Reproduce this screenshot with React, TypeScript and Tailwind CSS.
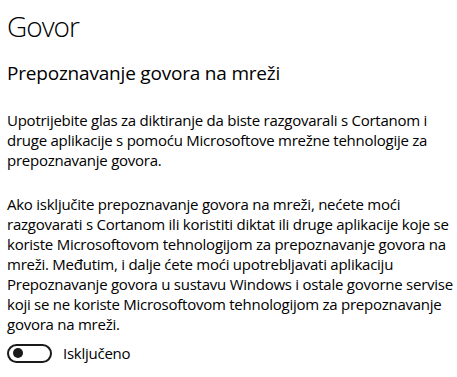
export default function App() {
  const font = { fontFamily: '"Open Sans", "Noto Sans", sans-serif' }
  return (
    <div className="h-[377px] w-[457px] overflow-hidden bg-white px-[7px] text-black" style={font}>
      <h1 className="mt-[8px] text-[28px] font-light leading-[36px] tracking-[-1px]">Govor</h1>
      <h2 className="mt-[15px] text-[19px] font-normal leading-[28px] tracking-[-0.2px]">Prepoznavanje govora na mreži</h2>
      <p className="mt-[23px] text-[15px] leading-[20px] tracking-[-0.25px] whitespace-nowrap">
        <span className="block">Upotrijebite glas za diktiranje da biste razgovarali s Cortanom i</span>
        <span className="block">druge aplikacije s pomoću Microsoftove mrežne tehnologije za</span>
        <span className="block">prepoznavanje govora.</span>
      </p>
      <p className="mt-[24px] text-[15px] leading-[20px] tracking-[-0.25px] whitespace-nowrap">
        <span className="block">Ako isključite prepoznavanje govora na mreži, nećete moći</span>
        <span className="block">razgovarati s Cortanom ili koristiti diktat ili druge aplikacije koje se</span>
        <span className="block">koriste Microsoftovom tehnologijom za prepoznavanje govora na</span>
        <span className="block">mreži. Međutim, i dalje ćete moći upotrebljavati aplikaciju</span>
        <span className="block">Prepoznavanje govora u sustavu Windows i ostale govorne servise</span>
        <span className="block">koji se ne koriste Microsoftovom tehnologijom za prepoznavanje</span>
        <span className="block">govora na mreži.</span>
      </p>
      <div className="mt-[9px] flex items-center gap-[11px]">
        <div className="flex h-[19px] w-[45px] items-center rounded-full border-2 border-[#1a1a1a] px-[4px]">
          <div className="h-[10px] w-[10px] rounded-full bg-[#1a1a1a]" />
        </div>
        <span className="text-[15px] leading-[20px] tracking-[-0.25px]">Isključeno</span>
      </div>
    </div>
  )
}
